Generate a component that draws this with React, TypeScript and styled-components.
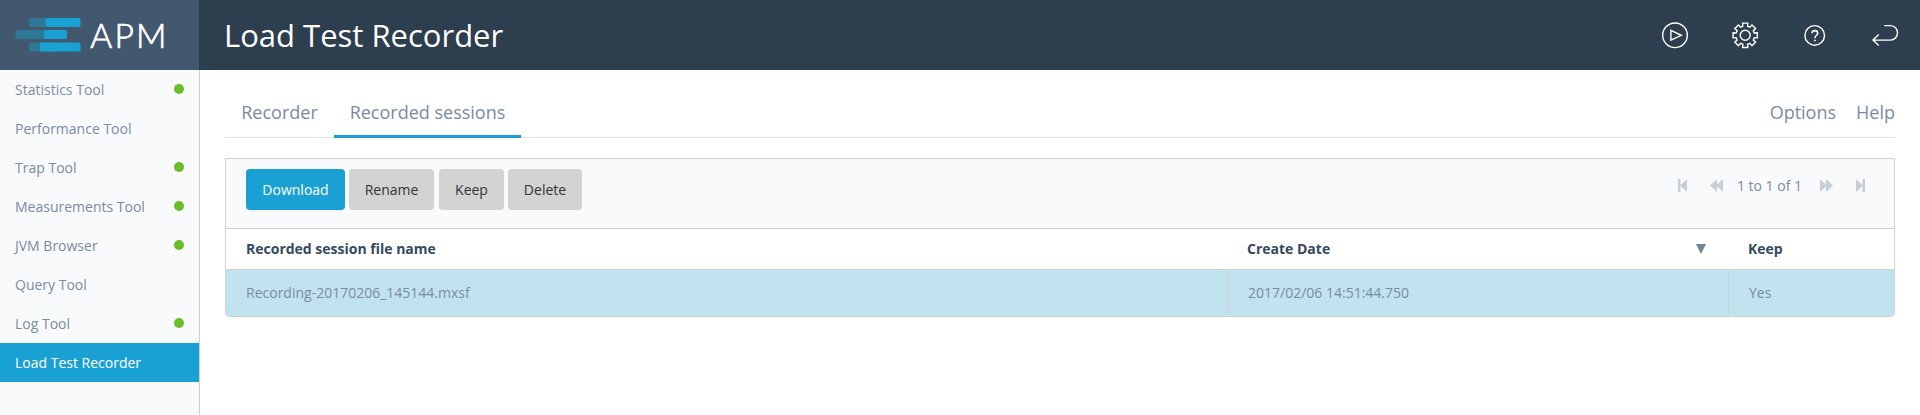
import React from 'react';
import styled, { createGlobalStyle } from 'styled-components';

const GlobalStyle = createGlobalStyle`
  * { box-sizing: border-box; }
  body {
    margin: 0;
    background: #fff;
    color: #7a8ca0;
    font: 14px/20px 'Open Sans', 'Noto Sans', sans-serif;
  }
`;

const Page = styled.div`
  display: grid;
  grid-template: 70px 345px / 200px 1fr;
  height: 415px;
  overflow: hidden;
`;

const Header = styled.header`
  grid-column: 1 / 3;
  display: flex;
  background: #2d3e4f;
  color: #fff;
`;

const Brand = styled.div`
  width: 199px;
  height: 70px;
  background: #41586e;
`;

const Title = styled.h1`
  flex: 1;
  margin: 0;
  padding: 0 0 0 25px;
  font-size: 31px;
  line-height: 71px;
  font-weight: 400;
`;

const HeaderActions = styled.div`
  display: flex;
  align-items: center;
  gap: 40px;
  padding-right: 20px;
`;

const ActionIcon = styled.svg`
  width: 30px;
  height: 30px;
  fill: none;
  stroke: #fff;
  stroke-width: 1.4;
`;

const Sidebar = styled.nav`
  background: #f9fafc;
  border-right: 1px solid #d0d0d0;
`;

const NavItem = styled.div<{ $active?: boolean }>`
  display: flex;
  align-items: center;
  justify-content: space-between;
  height: 39px;
  padding: 0 15px;
  background: ${(p) => (p.$active ? '#1aa1d3' : 'transparent')};
  color: ${(p) => (p.$active ? '#fff' : 'inherit')};
`;

const StatusDot = styled.span`
  width: 10px;
  height: 10px;
  margin-top: -1px;
  border-radius: 50%;
  background: #69be28;
`;

const Main = styled.main`
  padding: 16px 25px 0;
`;

const TabBar = styled.div`
  display: flex;
  height: 52px;
  border-bottom: 1px solid #e4e4e4;
  font-size: 18px;
  line-height: 52px;
`;

const Tab = styled.div<{ $active?: boolean; $width: number }>`
  width: ${(p) => p.$width}px;
  height: 52px;
  text-align: center;
  border-bottom: 3px solid ${(p) => (p.$active ? '#1aa1d3' : 'transparent')};
`;

const TabLinks = styled.div`
  display: flex;
  gap: 20px;
  margin-left: auto;
`;

const Panel = styled.section`
  margin-top: 20px;
  border: 1px solid #d0d0d0;
  border-radius: 0 0 4px 4px;
  overflow: hidden;
`;

const Toolbar = styled.div`
  display: flex;
  justify-content: space-between;
  align-items: flex-start;
  height: 70px;
  padding: 10px 29px 0 20px;
  background: #f9fafc;
  border-bottom: 1px solid #d0d0d0;
`;

const ButtonGroup = styled.div`
  display: flex;
`;

const Button = styled.button<{ $primary?: boolean; $width: number; $gap?: number }>`
  width: ${(p) => p.$width}px;
  height: 41px;
  margin: 0 ${(p) => p.$gap ?? 4}px 0 0;
  padding: 0;
  border: 0;
  border-radius: 4px;
  font: inherit;
  background: ${(p) => (p.$primary ? '#1aa1d3' : '#d3d3d3')};
  color: ${(p) => (p.$primary ? '#fff' : '#333')};
`;

const Pager = styled.div`
  display: flex;
  align-items: center;
  height: 33px;
`;

const PagerIcon = styled.svg<{ $before?: number; $after?: number; $width: number }>`
  width: ${(p) => p.$width}px;
  height: 13px;
  margin: 0 ${(p) => p.$after ?? 0}px 0 ${(p) => p.$before ?? 0}px;
  fill: #c6ced6;
`;

const Row = styled.div<{ $selected?: boolean }>`
  display: grid;
  grid-template-columns: 1001px 501px 1fr;
  height: ${(p) => (p.$selected ? 46 : 41)}px;
  background: ${(p) => (p.$selected ? '#c1e3ef' : '#fff')};
  border-bottom: ${(p) => (p.$selected ? '0' : '1px solid #d0d0d0')};
`;

const HeadCell = styled.div`
  display: flex;
  align-items: center;
  justify-content: space-between;
  padding: 0 22px 0 20px;
  color: #34495e;
  font-weight: 700;
`;

const Cell = styled.div`
  display: flex;
  align-items: center;
  padding-left: 20px;

  & + & {
    border-left: 1px solid #cfd1d2;
  }
`;

const SortIcon = styled.svg`
  width: 10px;
  height: 10px;
  fill: #70879b;
`;

const navItems = [
  { label: 'Statistics Tool', running: true },
  { label: 'Performance Tool' },
  { label: 'Trap Tool', running: true },
  { label: 'Measurements Tool', running: true },
  { label: 'JVM Browser', running: true },
  { label: 'Query Tool' },
  { label: 'Log Tool', running: true },
  { label: 'Load Test Recorder', active: true },
];

const Logo = () => (
  <svg width="199" height="70" viewBox="0 0 199 70">
    <g fill="#2e7898">
      <rect x="29" y="18" width="30" height="9" rx="2" />
      <rect x="15.5" y="30" width="40" height="9" rx="2" />
      <rect x="29" y="42.5" width="30" height="9" rx="2" />
    </g>
    <g fill="#1aa1d3">
      <rect x="45.5" y="18" width="35" height="9" rx="1.5" />
      <rect x="44" y="30" width="23" height="9" rx="1.5" />
      <rect x="40" y="42.5" width="40.5" height="9" rx="1.5" />
    </g>
    <text
      x="90.3 114.5 136"
      y="47.6"
      fill="#fff"
      stroke="#fff"
      strokeWidth="0.7"
      fontFamily="Lato, sans-serif"
      fontWeight="300"
      fontSize="33.5"
    >
      APM
    </text>
  </svg>
);

const gearPath = (() => {
  const c = 15;
  const points: string[] = [];
  for (let i = 0; i < 8; i++) {
    const a = (i * Math.PI) / 4 - Math.PI / 2;
    [
      [9.3, -0.26],
      [12.4, -0.21],
      [12.4, 0.21],
      [9.3, 0.26],
    ].forEach(([r, d]) => points.push(`${(c + r * Math.cos(a + d)).toFixed(2)},${(c + r * Math.sin(a + d)).toFixed(2)}`));
  }
  return `M${points.join('L')}Z`;
})();

export default function App() {
  return (
    <>
      <GlobalStyle />
      <Page>
        <Header>
          <Brand>
            <Logo />
          </Brand>
          <Title>Load Test Recorder</Title>
          <HeaderActions>
            <ActionIcon viewBox="0 0 30 30">
              <circle cx="15" cy="15.3" r="12.3" />
              <path d="M10.9 10.4v9.8l10.4-4.9z" />
            </ActionIcon>
            <ActionIcon viewBox="0 0 30 30">
              <path d={gearPath} transform="translate(.2 .3)" />
              <circle cx="15.2" cy="15.3" r="5" />
            </ActionIcon>
            <ActionIcon viewBox="0 0 30 30">
              <circle cx="14.7" cy="15.4" r="9.8" />
              <path d="M12 13.2c0-3.4 5.7-3.4 5.7 0 0 2.2-2.8 2-2.8 5M14.9 19.7v1.6" strokeWidth="1.6" />
            </ActionIcon>
            <ActionIcon viewBox="0 0 30 30">
              <path d="M14.3 5.6h6c9.6 0 9.6 14.5 0 14.5H3M8.7 14.5L3 20.1l5.7 5.5" />
            </ActionIcon>
          </HeaderActions>
        </Header>
        <Sidebar>
          {navItems.map((item) => (
            <NavItem key={item.label} $active={item.active}>
              {item.label}
              {item.running && <StatusDot />}
            </NavItem>
          ))}
        </Sidebar>
        <Main>
          <TabBar>
            <Tab $width={109}>Recorder</Tab>
            <Tab $width={187} $active>
              Recorded sessions
            </Tab>
            <TabLinks>
              <span>Options</span>
              <span>Help</span>
            </TabLinks>
          </TabBar>
          <Panel>
            <Toolbar>
              <ButtonGroup>
                <Button $primary $width={99}>Download</Button>
                <Button $width={85} $gap={5}>Rename</Button>
                <Button $width={65}>Keep</Button>
                <Button $width={74} $gap={0}>Delete</Button>
              </ButtonGroup>
              <Pager>
                <PagerIcon $width={9} $after={23} viewBox="0 0 9 13">
                  <path d="M0 0h2.4v13H0zM9 0v13L2 6.5z" />
                </PagerIcon>
                <PagerIcon $width={13} $after={14} viewBox="0 0 13 13">
                  <path d="M7 0v13L0 6.5zM13 0v13L6 6.5z" />
                </PagerIcon>
                <span>1 to 1 of 1</span>
                <PagerIcon $width={13} $before={18} viewBox="0 0 13 13">
                  <path d="M0 0v13l7-6.5zM6 0v13l7-6.5z" />
                </PagerIcon>
                <PagerIcon $width={9} $before={23} viewBox="0 0 9 13">
                  <path d="M6.6 0H9v13H6.6zM0 0v13l7-6.5z" />
                </PagerIcon>
              </Pager>
            </Toolbar>
            <Row>
              <HeadCell>Recorded session file name</HeadCell>
              <HeadCell>
                Create Date
                <SortIcon viewBox="0 0 10 10">
                  <path d="M0 0h10L5 10z" />
                </SortIcon>
              </HeadCell>
              <HeadCell>Keep</HeadCell>
            </Row>
            <Row $selected>
              <Cell>Recording-20170206_145144.mxsf</Cell>
              <Cell>2017/02/06 14:51:44.750</Cell>
              <Cell>Yes</Cell>
            </Row>
          </Panel>
        </Main>
      </Page>
    </>
  );
}
